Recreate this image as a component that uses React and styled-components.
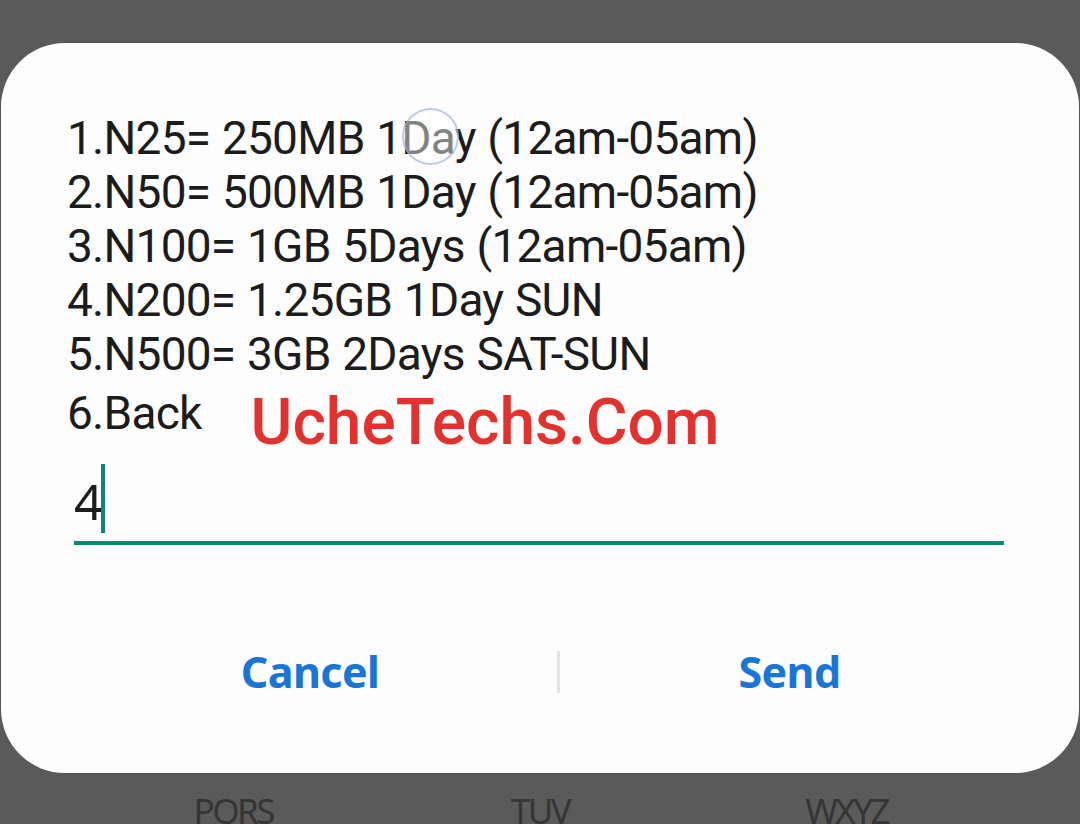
import React from "react"
import styled, { createGlobalStyle } from "styled-components"

const GlobalStyle = createGlobalStyle`
  html, body {
    margin: 0;
    padding: 0;
    background: #5a5a5a;
  }
  body {
    width: 1080px;
    height: 824px;
    overflow: hidden;
  }
`

const Screen = styled.div`
  width: 1080px;
  height: 824px;
  background: #5a5a5a;
  padding-top: 43px;
  box-sizing: border-box;
  overflow: hidden;
`

const Dialog = styled.div`
  position: relative;
  margin: 0 1px;
  height: 730px;
  background: #fdfdfd;
  border-radius: 64px;
  box-sizing: border-box;
  padding-top: 68px;
  display: flex;
  flex-direction: column;
`

const Message = styled.div`
  padding-left: 66px;
  font-family: Roboto, "Noto Sans", sans-serif;
  font-size: 46px;
  line-height: 54px;
  letter-spacing: -0.75px;
  word-spacing: 1px;
  color: #1c1c1c;
`

const Line = styled.div`
  height: 54px;
  white-space: nowrap;
`

const Watermark = styled.span`
  position: relative;
  top: 15px;
  margin-left: 49px;
  font-family: Roboto, "Liberation Sans", sans-serif;
  font-weight: 500;
  font-size: 64px;
  line-height: 54px;
  letter-spacing: 0;
  word-spacing: 0;
  color: #e3312e;
`

const Touch = styled.div`
  position: absolute;
  left: 401px;
  top: 65px;
  width: 57px;
  height: 57px;
  border-radius: 50%;
  border: 2px solid rgba(150, 165, 220, 0.6);
  background: rgba(255, 255, 255, 0.45);
  box-sizing: border-box;
`

const InputField = styled.div`
  margin: 29px 75px 0 73px;
  height: 77px;
  border-bottom: 4px solid #0f8574;
  display: flex;
  align-items: flex-end;
  font-family: "Noto Sans", "Open Sans", sans-serif;
  color: #1c1c1c;
`

const Typed = styled.span`
  font-size: 50px;
  line-height: 50px;
  margin-bottom: 15px;
  letter-spacing: -3px;
`

const Cursor = styled.span`
  width: 4px;
  height: 69px;
  margin: 0 0 8px 1px;
  background: #0f8574;
`

const Buttons = styled.div`
  margin-top: 97px;
  padding: 0 60px 0 62px;
  display: grid;
  grid-template-columns: 494px 3px 1fr;
  align-items: center;
`

const Button = styled.div`
  text-align: center;
  font-family: "Noto Sans", "Open Sans", sans-serif;
  font-weight: 700;
  font-size: 43px;
  color: #1976d6;
  letter-spacing: -0.6px;
`

const Divider = styled.div`
  height: 42px;
  background: #e4e4e4;
`

const Keypad = styled.div`
  padding: 14px 80px 0;
  display: grid;
  grid-template-columns: repeat(3, 1fr);
  font-family: "Noto Sans", sans-serif;
  font-size: 35px;
  letter-spacing: -2.5px;
  color: #353535;
  text-align: center;
`

const lines = [
  "1.N25= 250MB 1Day (12am-05am)",
  "2.N50= 500MB 1Day (12am-05am)",
  "3.N100= 1GB 5Days (12am-05am)",
  "4.N200= 1.25GB 1Day SUN",
  "5.N500= 3GB 2Days SAT-SUN",
]

const App = () => {
  return (
    <Screen>
      <GlobalStyle />
      <Dialog>
        <Message>
          {lines.map((l) => (
            <Line key={l}>{l}</Line>
          ))}
          <Line>
            6.Back
            <Watermark>UcheTechs.Com</Watermark>
          </Line>
        </Message>
        <Touch />
        <InputField>
          <Typed>4</Typed>
          <Cursor />
        </InputField>
        <Buttons>
          <Button>Cancel</Button>
          <Divider />
          <Button>Send</Button>
        </Buttons>
      </Dialog>
      <Keypad>
        <span>PQRS</span>
        <span>TUV</span>
        <span>WXYZ</span>
      </Keypad>
    </Screen>
  )
}

export default App
